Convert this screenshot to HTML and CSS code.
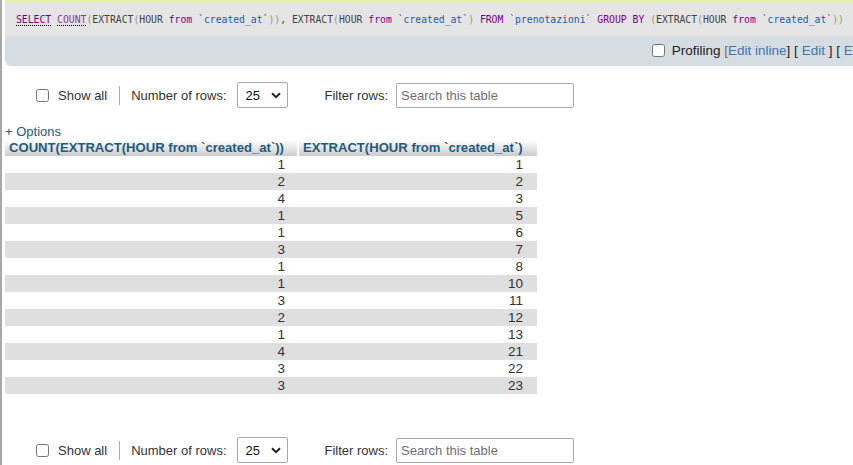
FILE: index.html
```html
<!DOCTYPE html>
<html lang="it">
<head>
<meta charset="utf-8">
<title>SQL result</title>
<link rel="stylesheet" href="styles.css">
</head>
<body>
<div class="page">
  <div class="result-top">
    <div class="strip"></div>
    <div class="sql"><code><a class="kw doc">SELECT</a> <a class="fn doc">COUNT</a><span class="br">(</span><span class="id">EXTRACT</span><span class="br">(</span><span class="id">HOUR</span> <span class="kw">from</span> <span class="col">`created_at`</span><span class="br">))</span><span class="id">,</span> <span class="id">EXTRACT</span><span class="br">(</span><span class="id">HOUR</span> <span class="kw">from</span> <span class="col">`created_at`</span><span class="br">)</span> <span class="kw">FROM</span> <span class="col">`prenotazioni`</span> <span class="kw">GROUP BY</span> <span class="br">(</span><span class="id">EXTRACT</span><span class="br">(</span><span class="id">HOUR</span> <span class="kw">from</span> <span class="col">`created_at`</span><span class="br">))</span></code></div>
    <div class="tools"><label class="pcheck"><input type="checkbox"> Profiling</label> <span class="bk-open">[</span><a class="lnk">Edit inline</a>] [ <a class="lnk">Edit</a> ] [ <a class="lnk">Explain SQL</a> ]</div>
  </div>

  <div class="nav">
    <label class="check"><input type="checkbox"> Show all</label>
    <span class="sep"></span>
    <span class="lbl">Number of rows:</span>
    <div class="select"><span>25</span><svg width="10" height="7" viewBox="0 0 10 7"><path d="M1 1.2 L5 5.2 L9 1.2" fill="none" stroke="#222" stroke-width="2"/></svg></div>
    <span class="lbl filter">Filter rows:</span>
    <input class="search" type="text" placeholder="Search this table">
  </div>

  <div class="options">+ Options</div>

  <table class="data">
    <colgroup><col class="c1"><col class="c2"></colgroup>
    <thead>
      <tr><th class="th1">COUNT(EXTRACT(HOUR from `created_at`))</th><th>EXTRACT(HOUR from `created_at`)</th></tr>
    </thead>
    <tbody>
      <tr><td>1</td><td>1</td></tr>
      <tr><td>2</td><td>2</td></tr>
      <tr><td>4</td><td>3</td></tr>
      <tr><td>1</td><td>5</td></tr>
      <tr><td>1</td><td>6</td></tr>
      <tr><td>3</td><td>7</td></tr>
      <tr><td>1</td><td>8</td></tr>
      <tr><td>1</td><td>10</td></tr>
      <tr><td>3</td><td>11</td></tr>
      <tr><td>2</td><td>12</td></tr>
      <tr><td>1</td><td>13</td></tr>
      <tr><td>4</td><td>21</td></tr>
      <tr><td>3</td><td>22</td></tr>
      <tr><td>3</td><td>23</td></tr>
    </tbody>
  </table>

  <div class="nav nav-bottom">
    <label class="check"><input type="checkbox"> Show all</label>
    <span class="sep"></span>
    <span class="lbl">Number of rows:</span>
    <div class="select"><span>25</span><svg width="10" height="7" viewBox="0 0 10 7"><path d="M1 1.2 L5 5.2 L9 1.2" fill="none" stroke="#222" stroke-width="2"/></svg></div>
    <span class="lbl filter">Filter rows:</span>
    <input class="search" type="text" placeholder="Search this table">
  </div>
</div>
</body>
</html>
```

FILE: styles.css
```css
html, body {
  margin: 0;
  padding: 0;
  overflow: hidden;
  background: #fff;
}
body {
  font-family: "Liberation Sans", Arial, sans-serif;
  font-size: 13px;
  color: #333;
  width: 853px;
  height: 465px;
}
.page {
  border-left: 2px solid #a8a8a8;
  padding-left: 3px;
  height: 465px;
  box-sizing: border-box;
  overflow: hidden;
}
.result-top {
  width: 848px;
  overflow: hidden;
}
.strip {
  height: 2px;
  background: #e6f1a2;
}
.sql {
  height: 34px;
  background: #e5e5e5;
  display: flex;
  align-items: center;
  padding-left: 11px;
  white-space: nowrap;
}
.sql code {
  font-family: "DejaVu Sans Mono", "Liberation Mono", monospace;
  font-size: 9.75px;
  color: #444;
}
.kw { color: #770088; }
.fn { color: #8a3a9a; }
.doc { border-bottom: 1px dotted #000; text-decoration: none; }
.br { color: #999977; }
.id { color: #444; }
.col { color: #1f5aa6; }
.tools {
  height: 30px;
  line-height: 30px;
  background: #d5dce2;
  border-bottom-left-radius: 6px;
  padding-left: 647px;
  white-space: nowrap;
  font-size: 13.5px;
  color: #222;
  overflow: hidden;
}
.pcheck input {
  width: 13px;
  height: 13px;
  margin: 0 3px 0 0;
  vertical-align: -2px;
}
.bk-open { color: #9a6a20; }
.lnk { color: #3f76ae; text-decoration: none; }
.check {
  display: inline-flex;
  align-items: center;
}
.check input {
  width: 13px;
  height: 13px;
  margin: 0 9px 0 0;
}
.nav {
  display: flex;
  align-items: center;
  height: 26px;
  margin-top: 16px;
  padding-left: 31px;
  color: #333;
}
.sep {
  width: 1px;
  height: 19px;
  background: #c9a775;
  margin: 0 11px 0 12px;
}
.select {
  width: 51px;
  height: 26px;
  box-sizing: border-box;
  border: 1px solid #a9a9a9;
  border-radius: 2px;
  margin-left: 10px;
  display: flex;
  align-items: center;
  justify-content: space-between;
  padding: 0 6px 0 8px;
  color: #111;
  font-size: 13px;
}
.select svg { display: block; }
.filter { margin-left: 37px; }
.search {
  margin-left: 8px;
  width: 178px;
  height: 25px;
  box-sizing: border-box;
  border: 1px solid #a9a9a9;
  border-radius: 2px;
  padding: 0 4px;
  font-family: "Liberation Sans", Arial, sans-serif;
  font-size: 13px;
  color: #333;
  outline: none;
}
.search::placeholder { color: #6f6f6f; }
.options {
  margin-top: 16px;
  height: 16px;
  line-height: 16px;
  color: #235a81;
  font-size: 13px;
}
.data {
  border-collapse: collapse;
  table-layout: fixed;
  width: 532px;
  margin-top: 0;
}
.c1 { width: 294px; }
.c2 { width: 238px; }
.data th {
  height: 16px;
  padding: 0 0 0 4px;
  text-align: left;
  font-weight: bold;
  font-size: 13.1px;
  line-height: 16px;
  color: #235a81;
  background: linear-gradient(#ffffff, #cccccc);
  white-space: nowrap;
  overflow: hidden;
}
.data th.th1 { box-shadow: inset -2px 0 0 #fff; }
.data td {
  height: 17px;
  padding: 0 14px 0 0;
  text-align: right;
  font-size: 13.5px;
  line-height: 17px;
  color: #333;
}
.data tbody tr:nth-child(even) td { background: #dfdfdf; }
.nav-bottom { margin-top: 43px; }
```
